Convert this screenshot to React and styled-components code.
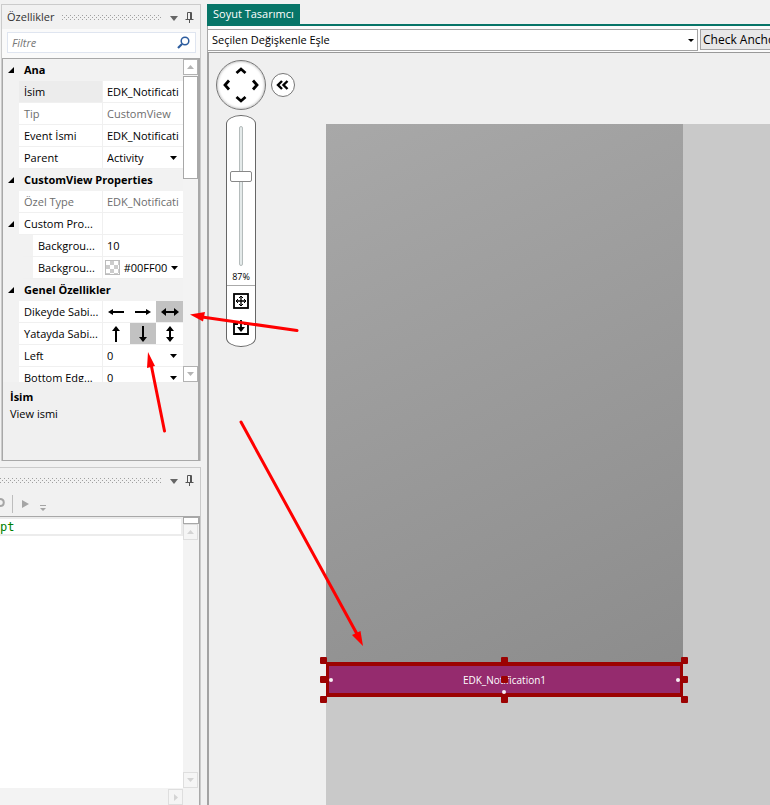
import React, { useState } from "react";
import styled, { createGlobalStyle } from "styled-components";

const GlobalStyle = createGlobalStyle`
  * {
    box-sizing: border-box;
  }
  body {
    margin: 0;
    background-color: #f1f1f1;
    color: #000;
    font-family: "Open Sans", "Noto Sans", sans-serif;
    font-size: 11px;
    line-height: 16px;
  }
  button, input, select {
    margin: 0;
    padding: 0;
    border: 0;
    border-radius: 0;
    background: transparent;
    color: inherit;
    font: inherit;
    outline: none;
  }
  button {
    display: flex;
    align-items: center;
    justify-content: center;
  }
  svg {
    display: block;
    flex: none;
  }
`;

/* ---------- page ---------- */

const Window = styled.div`
  position: relative;
  display: flex;
  gap: 6px;
  height: 100vh;
  padding-top: 4px;
  overflow: hidden;
`;
const Sidebar = styled.aside`
  flex: 0 0 201px;
  display: flex;
  flex-direction: column;
  gap: 6px;
  min-height: 0;
`;
const Workspace = styled.main`
  flex: 1;
  min-width: 0;
  display: flex;
  flex-direction: column;
`;

/* ---------- docked panels ---------- */

const Panel = styled.section`
  display: flex;
  flex-direction: column;
  margin-left: ${(props) => (props.$cut ? 0 : 1)}px;
  border: 1px solid #cbcbcb;
  border-left-width: ${(props) => (props.$cut ? 0 : 1)}px;
  border-bottom-width: 0;
  flex: ${(props) => (props.$cut ? "1" : "none")};
  min-height: 0;
`;
const PanelHeader = styled.header`
  display: flex;
  align-items: center;
  gap: 8px;
  height: 24px;
  padding: 0 6px 0 ${(props) => (props.$cut ? 0 : 5)}px;
  color: #333;
`;
const PanelTitle = styled.h2`
  margin: 0;
  font-size: 11px;
  font-weight: 400;
`;
const Grip = styled.svg`
  flex: 1;
  width: 0;
  height: 5px;
`;
const HeaderButtons = styled.div`
  display: flex;
  align-items: center;
  gap: 7px;
`;
const MenuButton = styled.button`
  padding-top: 3px;
  color: #666;
`;

const FilterBar = styled.div`
  padding: 3px 4px 5px 5px;
  background-color: #fafafa;
`;
const FilterBox = styled.label`
  display: flex;
  align-items: center;
  height: 21px;
  padding: 0 5px 0 4px;
  border: 1px solid #dfe5f0;
  background-color: #fff;
`;
const FilterInput = styled.input`
  flex: 1;
  min-width: 0;
  font-style: italic;
  &::placeholder {
    color: #777;
    opacity: 1;
  }
`;

const PanelBody = styled.div`
  border: 1px solid #a8a8a8;
  border-width: 1px 2px 1px 1px;
  background-color: #f0f0f0;
`;
const GridPane = styled.div`
  display: flex;
  height: 323px;
  overflow: hidden;
  background-color: #f2f2f2;
`;
const GridTable = styled.table`
  flex: 1;
  width: 0;
  table-layout: fixed;
  border-collapse: separate;
  border-spacing: 0;
  align-self: flex-start;
`;
const Row = styled.tr`
  height: 22px;
  color: ${(props) => (props.$muted ? "#6d6d6d" : "#000")};
`;
const Gutter = styled.td`
  padding: 0 0 0 5px;
`;
const GroupName = styled.th`
  padding: 0 0 0 5px;
  text-align: left;
  font-weight: 700;
  white-space: nowrap;
`;
const Name = styled.th`
  height: 22px;
  padding: 0 1px 0 5px;
  overflow: hidden;
  border-left: ${(props) => (props.$nested ? 14 : 0)}px solid #f2f2f2;
  border-right: 1px solid #f0f0f0;
  border-bottom: 1px solid #f0f0f0;
  background-color: ${(props) => (props.$active ? "#ececec" : "#fff")};
  text-align: left;
  font-weight: 400;
  white-space: nowrap;
`;
const Value = styled.td`
  height: 22px;
  padding: 0;
  border-bottom: 1px solid #f0f0f0;
  background-color: #fff;
  white-space: nowrap;
`;
const ValueInput = styled.input`
  display: block;
  width: 100%;
  height: 21px;
  padding-left: 4px;
`;
const SelectWrap = styled.div`
  display: flex;
  align-items: center;
  padding: 0 6px 0 4px;
`;
const ValueSelect = styled.select`
  appearance: none;
  flex: 1;
  width: 0;
  height: 21px;
`;
const ColorButton = styled.button`
  width: 100%;
  height: 21px;
  gap: 4px;
  padding: 0 6px 0 3px;
`;
const Swatch = styled.span`
  flex: none;
  width: 15px;
  height: 15px;
  border: 1px solid #bbb;
  background: repeating-conic-gradient(#ccc 0 25%, #fff 0 50%) 0 0 / 8px 8px;
`;
const ColorText = styled.span`
  flex: 1;
  text-align: left;
`;
const AnchorGroup = styled.div`
  display: flex;
`;
const AnchorButton = styled.button`
  flex: 1;
  height: 21px;
  background-color: ${(props) => (props.$on ? "#c2c2c2" : "transparent")};
`;

const ScrollBar = styled.div`
  flex: 0 0 ${(props) => (props.$wide ? 16 : 15)}px;
  display: flex;
  flex-direction: column;
  background-color: #f3f3f3;
`;
const ScrollButton = styled.button`
  flex: none;
  width: 15px;
  height: 16px;
  border: 1px solid ${(props) => (props.$faint ? "#dedede" : "#b2b2b2")};
  background-color: ${(props) => (props.$faint ? "#f5f5f5" : "#fff")};
  color: ${(props) => (props.$faint ? "#d4d4d4" : "#b5b5b5")};
`;
const ScrollThumb = styled.div`
  height: 103px;
  margin-top: 1px;
  border: 1px solid #a8a8a8;
  background-color: #fff;
`;
const Spacer = styled.div`
  flex: 1;
`;
const Description = styled.div`
  height: 78px;
  padding: 7px;
`;
const DescTitle = styled.h3`
  margin: 0 0 1px;
  font-size: 11px;
  font-weight: 700;
`;
const DescText = styled.p`
  margin: 0;
`;

/* ---------- script panel ---------- */

const ScriptTools = styled.div`
  display: flex;
  align-items: center;
  gap: 9px;
  height: 24px;
  color: #a5a5a5;
`;
const ToolDivider = styled.div`
  width: 1px;
  height: 18px;
  margin-left: -2px;
  background-color: #bdbdbd;
`;
const OverflowButton = styled.button`
  align-self: flex-end;
  padding: 0 2px 5px;
`;
const Editor = styled.div`
  flex: 1;
  display: flex;
  min-height: 0;
  border-top: 1px solid #a8a8a8;
  border-right: 1px solid #a8a8a8;
`;
const EditorColumn = styled.div`
  flex: 1;
  display: flex;
  flex-direction: column;
  min-width: 0;
  background-color: #fff;
`;
const CodeInput = styled.input`
  width: 100%;
  height: 19px;
  border: 2px solid #ececec;
  border-left: 0;
  color: #008000;
  font-family: "DejaVu Sans Mono", "Liberation Mono", monospace;
  font-size: 12px;
`;
const BottomScroll = styled.div`
  display: flex;
  justify-content: flex-end;
  height: 17px;
  padding-top: 1px;
  background-color: #f3f3f3;
`;
const SplitHandle = styled.div`
  width: 16px;
  height: 7px;
  border: 1px solid #a8a8a8;
  background-color: #fff;
`;

/* ---------- designer ---------- */

const TabBar = styled.div`
  display: flex;
  border-bottom: 2px solid #077568;
`;
const Tab = styled.button`
  height: 20px;
  padding: 0 6px;
  background-color: #077568;
  color: #fff;
`;
const DesignerBar = styled.div`
  display: flex;
  gap: 2px;
  height: 26px;
  padding-top: 3px;
  border-left: 1px solid #a8a8a8;
  background-color: #fbfbfb;
`;
const MatchBox = styled.div`
  flex: 1;
  display: flex;
  align-items: center;
  height: 22px;
  padding: 0 3px 0 4px;
  border: 1px solid #a3a3a3;
  border-left: 0;
  background-color: #fff;
`;
const CheckButton = styled.button`
  flex: 0 0 70px;
  justify-content: flex-start;
  height: 21px;
  padding-left: 2px;
  border: 1px solid #a3a3a3;
  border-right: 0;
  background-color: #e8e8e8;
  overflow: hidden;
  font-size: 12px;
  white-space: nowrap;
`;
const Canvas = styled.div`
  position: relative;
  flex: 1;
  min-height: 0;
  padding: 71px 0 0 117px;
  border-left: 2px solid #a3a3a3;
  border-top: 1px solid #999;
  background-color: #efefef;
`;
const Artboard = styled.div`
  height: 100%;
  background-color: #c9c9c9;
`;
const Device = styled.div`
  display: flex;
  flex-direction: column;
  justify-content: flex-end;
  width: 357px;
  height: 573px;
  background: linear-gradient(155deg, #a8a8a8, #8b8b8b);
`;
const CustomView = styled.div`
  position: relative;
  display: flex;
  align-items: center;
  justify-content: center;
  height: 35px;
  border: 4px solid #9c0202;
  border-width: 4px 3px;
  background-color: #952b6e;
  color: #fff;
  font-size: 10px;
`;
const Handle = styled.span`
  position: absolute;
  left: ${(props) => props.$x};
  top: ${(props) => props.$y};
  width: 7px;
  height: 7px;
  margin: -3px;
  border-radius: 1px;
  background-color: #9c0202;
`;
const Dot = styled(Handle)`
  width: 4px;
  height: 4px;
  margin: -2px;
  border-radius: 2px;
  background-color: #f6eef3;
`;

const CanvasTools = styled.div`
  position: absolute;
  left: 7px;
  top: 7px;
`;
const NavRow = styled.div`
  display: flex;
  align-items: center;
  gap: 5px;
`;
const PanPad = styled.div`
  display: grid;
  grid-template-columns: 14px 14px 14px;
  grid-template-rows: 14px 14px 14px;
  place-content: center;
  width: 50px;
  height: 50px;
  border: 1px solid #777;
  border-radius: 50%;
  background-color: #fff;
  box-shadow: inset 0 0 3px #999;
`;
const PanButton = styled.button`
  grid-column: ${(props) => props.$col};
  grid-row: ${(props) => props.$row};
`;
const CollapseButton = styled.button`
  width: 24px;
  height: 24px;
  border: 1px solid #777;
  border-radius: 50%;
  background-color: #fff;
`;
const ZoomPanel = styled.div`
  display: flex;
  flex-direction: column;
  align-items: center;
  width: 30px;
  height: 232px;
  margin: 5px 0 0 10px;
  padding-top: 10px;
  border: 1px solid #666;
  border-radius: 15px / 9px;
  background-color: #fff;
`;
const ZoomSlider = styled.input`
  appearance: none;
  writing-mode: vertical-lr;
  direction: rtl;
  width: 22px;
  height: 140px;
  &::-webkit-slider-runnable-track {
    width: 4px;
    height: 140px;
    border: 1px solid #b5bcbc;
    border-radius: 2px;
    background-color: #e4eaea;
  }
  &::-webkit-slider-thumb {
    appearance: none;
    width: 22px;
    height: 11px;
    margin-left: -10px;
    border: 1px solid #888;
    border-radius: 2px;
    background-color: #fff;
  }
`;
const ZoomValue = styled.output`
  margin-top: 3px;
  font-size: 9px;
`;
const ZoomActions = styled.div`
  align-self: stretch;
  display: flex;
  flex-direction: column;
  align-items: center;
  gap: 10px;
  padding-top: 7px;
  border-top: 1px solid #aaa;
`;

const Annotations = styled.svg`
  position: absolute;
  left: 0;
  top: 0;
  pointer-events: none;
`;

/* ---------- icons ---------- */

const Triangle = ({ dir = "down", w = 8, h = 5 }) => {
  const points = {
    down: `0,0 ${w},0 ${w / 2},${h}`,
    up: `0,${h} ${w},${h} ${w / 2},0`,
    right: `0,0 ${w},${h / 2} 0,${h}`,
    corner: `${w},0 ${w},${h} 0,${h}`,
  };
  return (
    <svg width={w} height={h} fill="currentColor" aria-hidden="true">
      <polygon points={points[dir]} />
    </svg>
  );
};

const PinIcon = () => (
  <svg width="9" height="11" fill="none" stroke="#555" aria-hidden="true">
    <path d="M2.5 7V.5H6.5V7M5.5 1V7M0.5 7.5H8.5M4.5 7V11" />
  </svg>
);

const SearchIcon = () => (
  <svg width="13" height="13" fill="none" stroke="#2c5c9e" aria-hidden="true">
    <circle cx="8" cy="5" r="3.8" strokeWidth="1.5" />
    <path d="M5 8L1 12" strokeWidth="2.2" />
  </svg>
);

const anchorShapes = {
  left: { shaft: "M5 8H17", head: "M1 8L6 5V11Z" },
  right: { shaft: "M1 8H13", head: "M17 8L12 5V11Z" },
  horizontal: { shaft: "M5 8H14", head: "M0 8L5 4V12ZM18 8L13 4V12Z" },
  up: { shaft: "M9 4V16", head: "M9 0L5 5H13Z" },
  down: { shaft: "M9 0V12", head: "M9 16L5 11H13Z" },
  vertical: { shaft: "M9 4V12", head: "M9 0L5 5H13ZM9 16L5 11H13Z" },
};
const AnchorIcon = ({ type }) => (
  <svg width="18" height="16" aria-hidden="true">
    <path d={anchorShapes[type].shaft} stroke="#000" strokeWidth="2" />
    <path d={anchorShapes[type].head} />
  </svg>
);

const chevronPaths = {
  up: "M2.5 9L7 5L11.5 9",
  down: "M2.5 5L7 9L11.5 5",
  left: "M9 2.5L5 7L9 11.5",
  right: "M5 2.5L9 7L5 11.5",
};
const Chevron = ({ dir }) => (
  <svg width="14" height="14" fill="none" stroke="#000" strokeWidth="2.8" aria-hidden="true">
    <path d={chevronPaths[dir]} />
  </svg>
);

const FitIcon = () => (
  <svg width="16" height="16" fill="none" stroke="#000" aria-hidden="true">
    <rect x="1" y="1" width="14" height="14" strokeWidth="1.8" />
    <path d="M3 8H13M8 3V13" strokeWidth="1.3" />
    <path d="M5 6L3 8L5 10M11 6L13 8L11 10M6 5L8 3L10 5M6 11L8 13L10 11" />
  </svg>
);

const InsertIcon = () => (
  <svg width="16" height="16" fill="none" stroke="#000" aria-hidden="true">
    <path d="M5 5H1V15H15V5H11" strokeWidth="1.8" />
    <path d="M8 1V9" strokeWidth="1.8" />
    <path d="M4 8H12L8 13Z" fill="#000" stroke="none" />
  </svg>
);

/* ---------- components ---------- */

const PanelBar = ({ title }) => (
  <PanelHeader $cut={!title}>
    {title && <PanelTitle>{title}</PanelTitle>}
    <Grip aria-hidden="true">
      <defs>
        <pattern id="grip" width="4" height="4" patternUnits="userSpaceOnUse">
          <path d="M0 0H1V1H0ZM2 2H3V3H2Z" fill="#a0a0a0" />
        </pattern>
      </defs>
      <rect width="100%" height="5" fill="url(#grip)" />
    </Grip>
    <HeaderButtons>
      <MenuButton aria-label="Menü">
        <Triangle />
      </MenuButton>
      <button aria-label="Sabitle">
        <PinIcon />
      </button>
    </HeaderButtons>
  </PanelHeader>
);

const Group = ({ name }) => (
  <Row>
    <Gutter>
      <Triangle dir="corner" w={6} h={6} />
    </Gutter>
    <GroupName colSpan={2}>{name}</GroupName>
  </Row>
);

const Property = ({ name, nested, active, muted, open, children }) => (
  <Row $muted={muted}>
    <Gutter>{open && <Triangle dir="corner" w={6} h={6} />}</Gutter>
    <Name scope="row" $nested={nested} $active={active}>
      {name}
    </Name>
    <Value>{children}</Value>
  </Row>
);

const SelectValue = ({ label, value }) => (
  <SelectWrap>
    <ValueSelect aria-label={label} defaultValue={value}>
      <option>{value}</option>
    </ValueSelect>
    <Triangle w={7} h={4} />
  </SelectWrap>
);

const AnchorValue = ({ types, initial }) => {
  const [selected, setSelected] = useState(initial);

  return (
    <AnchorGroup>
      {types.map((type) => (
        <AnchorButton
          key={type}
          aria-label={type}
          $on={type === selected}
          onClick={() => setSelected(type)}
        >
          <AnchorIcon type={type} />
        </AnchorButton>
      ))}
    </AnchorGroup>
  );
};

const Properties = () => (
  <Panel>
    <PanelBar title="Özellikler" />
    <FilterBar>
      <FilterBox>
        <FilterInput placeholder="Filtre" aria-label="Filtre" />
        <SearchIcon />
      </FilterBox>
    </FilterBar>
    <PanelBody>
      <GridPane>
        <GridTable>
          <colgroup>
            <col width="16" />
            <col width="84" />
            <col />
          </colgroup>
          <tbody>
            <Group name="Ana" />
            <Property name="İsim" active>
              <ValueInput aria-label="İsim" defaultValue="EDK_Notificati" />
            </Property>
            <Property name="Tip" muted>
              <ValueInput aria-label="Tip" readOnly value="CustomView" />
            </Property>
            <Property name="Event İsmi">
              <ValueInput aria-label="Event İsmi" defaultValue="EDK_Notificati" />
            </Property>
            <Property name="Parent">
              <SelectValue label="Parent" value="Activity" />
            </Property>
            <Group name="CustomView Properties" />
            <Property name="Özel Type" muted>
              <ValueInput aria-label="Özel Type" readOnly value="EDK_Notificati" />
            </Property>
            <Property name="Custom Pro..." open />
            <Property name="Backgrou..." nested>
              <ValueInput aria-label="Background" defaultValue="10" />
            </Property>
            <Property name="Backgrou..." nested>
              <ColorButton>
                <Swatch />
                <ColorText>#00FF00</ColorText>
                <Triangle w={7} h={4} />
              </ColorButton>
            </Property>
            <Group name="Genel Özellikler" />
            <Property name="Dikeyde Sabi...">
              <AnchorValue types={["left", "right", "horizontal"]} initial="horizontal" />
            </Property>
            <Property name="Yatayda Sabi...">
              <AnchorValue types={["up", "down", "vertical"]} initial="down" />
            </Property>
            <Property name="Left">
              <SelectValue label="Left" value="0" />
            </Property>
            <Property name="Bottom Edg...">
              <SelectValue label="Bottom Edge" value="0" />
            </Property>
          </tbody>
        </GridTable>
        <ScrollBar>
          <ScrollButton aria-label="Yukarı">
            <Triangle dir="up" w={7} h={4} />
          </ScrollButton>
          <ScrollThumb />
          <Spacer />
          <ScrollButton aria-label="Aşağı">
            <Triangle w={7} h={4} />
          </ScrollButton>
        </ScrollBar>
      </GridPane>
      <Description>
        <DescTitle>İsim</DescTitle>
        <DescText>View ismi</DescText>
      </Description>
    </PanelBody>
  </Panel>
);

const ScriptPanel = () => (
  <Panel $cut>
    <PanelBar />
    <ScriptTools>
      <svg width="5" height="12" fill="none" stroke="currentColor" strokeWidth="2" aria-hidden="true">
        <path d="M0 1C5 1 5 8 0 8" />
      </svg>
      <ToolDivider />
      <button aria-label="Çalıştır">
        <Triangle dir="right" w={7} h={8} />
      </button>
      <OverflowButton aria-label="Diğer">
        <svg width="6" height="6" fill="currentColor" aria-hidden="true">
          <path d="M0 0H6V1H0ZM0 3H6L3 6Z" />
        </svg>
      </OverflowButton>
    </ScriptTools>
    <Editor>
      <EditorColumn>
        <CodeInput aria-label="Script" defaultValue="pt" />
        <Spacer />
        <BottomScroll>
          <ScrollButton $faint aria-label="Sağa">
            <Triangle dir="right" w={4} h={7} />
          </ScrollButton>
        </BottomScroll>
      </EditorColumn>
      <ScrollBar $wide>
        <SplitHandle />
        <ScrollButton $faint aria-label="Yukarı">
          <Triangle dir="up" w={7} h={4} />
        </ScrollButton>
        <Spacer />
        <ScrollButton $faint aria-label="Aşağı">
          <Triangle w={7} h={4} />
        </ScrollButton>
        <BottomScroll />
      </ScrollBar>
    </Editor>
  </Panel>
);

const Designer = () => {
  const [zoom, setZoom] = useState(87);

  return (
    <Workspace>
      <TabBar>
        <Tab>Soyut Tasarımcı</Tab>
      </TabBar>
      <DesignerBar>
        <MatchBox>
          <ValueSelect aria-label="Değişken" defaultValue="esle">
            <option value="esle">Seçilen Değişkenle Eşle</option>
          </ValueSelect>
          <Triangle w={6} h={3} />
        </MatchBox>
        <CheckButton>Check Anchors</CheckButton>
      </DesignerBar>
      <Canvas>
        <Artboard>
          <Device>
            <CustomView>
              EDK_Notification1
              {["-6px", "calc(50% - 1px)", "calc(100% + 4px)"].map((x) =>
                ["-6px", "calc(50% - 1px)", "calc(100% + 6px)"].map((y) => (
                  <Handle key={x + y} $x={x} $y={y} />
                ))
              )}
              <Dot $x="2px" $y="50%" />
              <Dot $x="calc(50% - 1px)" $y="calc(100% - 1px)" />
              <Dot $x="calc(100% - 2px)" $y="50%" />
            </CustomView>
          </Device>
        </Artboard>
        <CanvasTools>
          <NavRow>
            <PanPad>
              <PanButton $col={2} $row={1} aria-label="Yukarı">
                <Chevron dir="up" />
              </PanButton>
              <PanButton $col={1} $row={2} aria-label="Sola">
                <Chevron dir="left" />
              </PanButton>
              <PanButton $col={3} $row={2} aria-label="Sağa">
                <Chevron dir="right" />
              </PanButton>
              <PanButton $col={2} $row={3} aria-label="Aşağı">
                <Chevron dir="down" />
              </PanButton>
            </PanPad>
            <CollapseButton aria-label="Daralt">
              <svg width="14" height="12" fill="none" stroke="#000" strokeWidth="2.4" aria-hidden="true">
                <path d="M6 2L2 6L6 10M11.5 2L7.5 6L11.5 10" />
              </svg>
            </CollapseButton>
          </NavRow>
          <ZoomPanel>
            <ZoomSlider
              type="range"
              min="10"
              max="128"
              aria-label="Zoom"
              value={zoom}
              onChange={(event) => setZoom(event.target.value)}
            />
            <ZoomValue>{zoom}%</ZoomValue>
            <ZoomActions>
              <button aria-label="Sığdır">
                <FitIcon />
              </button>
              <button aria-label="Yerleştir">
                <InsertIcon />
              </button>
            </ZoomActions>
          </ZoomPanel>
        </CanvasTools>
      </Canvas>
    </Workspace>
  );
};

const RedArrows = () => (
  <Annotations width="770" height="805" fill="#ff0000" stroke="#ff0000" strokeWidth="3" strokeLinecap="round" aria-hidden="true">
    <path d="M297 330.5L202 317M164.5 431L151 364M241 422L357 634" fill="none" />
    <path d="M190 314.5L205 312L203 321.5ZM148 352L155 366L147 368ZM363 646L352 635L360.5 631Z" stroke="none" />
  </Annotations>
);

const App = () => {
  return (
    <>
      <GlobalStyle />
      <Window>
        <Sidebar>
          <Properties />
          <ScriptPanel />
        </Sidebar>
        <Designer />
        <RedArrows />
      </Window>
    </>
  );
};

export default App;
